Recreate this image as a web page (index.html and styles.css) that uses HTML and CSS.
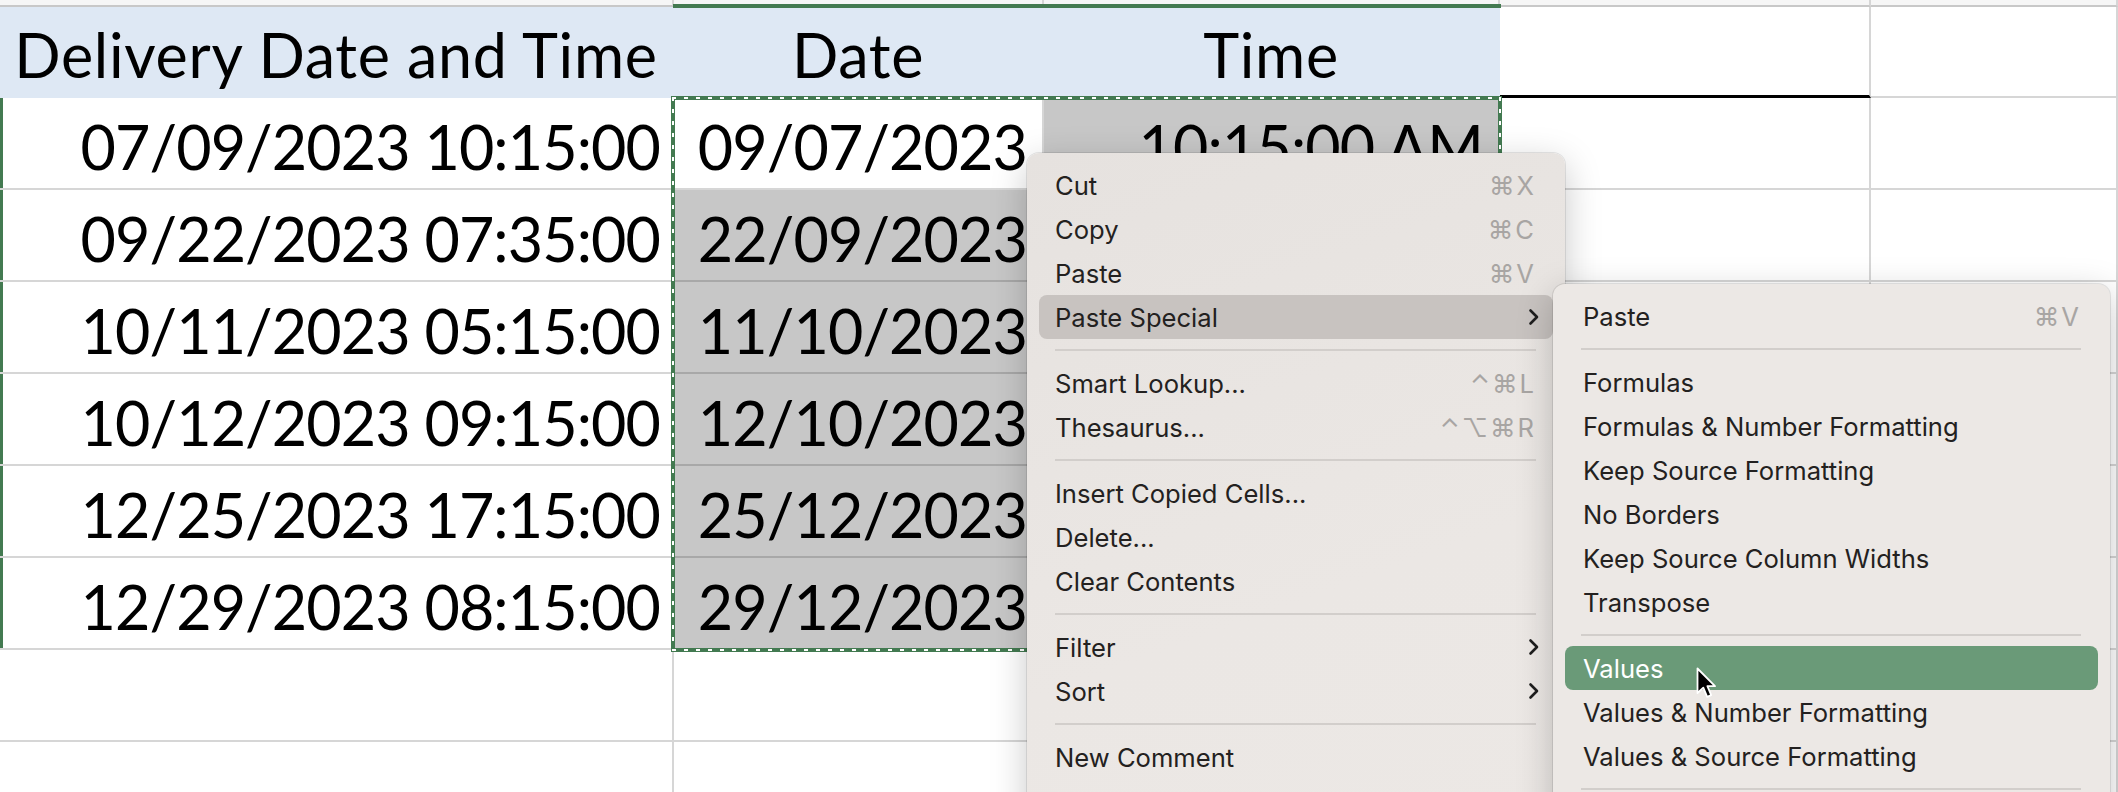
FILE: index.html
```html
<!DOCTYPE html>
<html>
<head>
<meta charset="utf-8">
<link rel="stylesheet" href="styles.css">
</head>
<body>
<div class="sheet">
  <div class="c top"></div><div class="c top"></div><div class="c top"></div><div class="c top"></div><div class="c top"></div>

  <div class="c hd">Delivery Date and Time</div>
  <div class="c hd">Date</div>
  <div class="c hd hd-last">Time</div>
  <div class="c d-top"></div>
  <div class="c"></div>

  <div class="c edge">07/09/2023 10:15:00</div>
  <div class="c active">09/07/2023</div>
  <div class="c sel">10:15:00 AM</div>
  <div class="c"></div><div class="c"></div>

  <div class="c edge">09/22/2023 07:35:00</div>
  <div class="c sel">22/09/2023</div>
  <div class="c sel">7:35:00 AM</div>
  <div class="c"></div><div class="c"></div>

  <div class="c edge">10/11/2023 05:15:00</div>
  <div class="c sel">11/10/2023</div>
  <div class="c sel">5:15:00 AM</div>
  <div class="c"></div><div class="c"></div>

  <div class="c edge">10/12/2023 09:15:00</div>
  <div class="c sel">12/10/2023</div>
  <div class="c sel">9:15:00 AM</div>
  <div class="c"></div><div class="c"></div>

  <div class="c edge">12/25/2023 17:15:00</div>
  <div class="c sel">25/12/2023</div>
  <div class="c sel">5:15:00 PM</div>
  <div class="c"></div><div class="c"></div>

  <div class="c edge">12/29/2023 08:15:00</div>
  <div class="c sel">29/12/2023</div>
  <div class="c sel">8:15:00 AM</div>
  <div class="c"></div><div class="c"></div>

  <div class="c"></div><div class="c"></div><div class="c"></div><div class="c"></div><div class="c"></div>
  <div class="c"></div><div class="c"></div><div class="c"></div><div class="c"></div><div class="c"></div>

  <div class="col-mark"></div>
  <div class="marquee"></div>
</div>

<div class="menu main-menu">
  <div class="item"><span>Cut</span><span class="sc">⌘X</span></div>
  <div class="item"><span>Copy</span><span class="sc">⌘C</span></div>
  <div class="item"><span>Paste</span><span class="sc">⌘V</span></div>
  <div class="item hl"><span>Paste Special</span><svg class="chev" width="12" height="18" viewBox="0 0 12 18"><path d="M2.5 2.5 L9 9 L2.5 15.5" fill="none" stroke="#1e1e1e" stroke-width="2.6" stroke-linecap="round" stroke-linejoin="round"/></svg></div>
  <div class="sep"></div>
  <div class="item"><span>Smart Lookup...</span><span class="sc">⌃⌘L</span></div>
  <div class="item"><span>Thesaurus...</span><span class="sc">⌃⌥⌘R</span></div>
  <div class="sep"></div>
  <div class="item"><span>Insert Copied Cells...</span></div>
  <div class="item"><span>Delete...</span></div>
  <div class="item"><span>Clear Contents</span></div>
  <div class="sep"></div>
  <div class="item"><span>Filter</span><svg class="chev" width="12" height="18" viewBox="0 0 12 18"><path d="M2.5 2.5 L9 9 L2.5 15.5" fill="none" stroke="#1e1e1e" stroke-width="2.6" stroke-linecap="round" stroke-linejoin="round"/></svg></div>
  <div class="item"><span>Sort</span><svg class="chev" width="12" height="18" viewBox="0 0 12 18"><path d="M2.5 2.5 L9 9 L2.5 15.5" fill="none" stroke="#1e1e1e" stroke-width="2.6" stroke-linecap="round" stroke-linejoin="round"/></svg></div>
  <div class="sep"></div>
  <div class="item"><span>New Comment</span></div>
  <div class="item"><span>New Note</span></div>
</div>

<div class="menu sub-menu">
  <div class="item"><span>Paste</span><span class="sc">⌘V</span></div>
  <div class="sep"></div>
  <div class="item"><span>Formulas</span></div>
  <div class="item"><span>Formulas &amp; Number Formatting</span></div>
  <div class="item"><span>Keep Source Formatting</span></div>
  <div class="item"><span>No Borders</span></div>
  <div class="item"><span>Keep Source Column Widths</span></div>
  <div class="item"><span>Transpose</span></div>
  <div class="sep"></div>
  <div class="item green"><span>Values</span></div>
  <div class="item"><span>Values &amp; Number Formatting</span></div>
  <div class="item"><span>Values &amp; Source Formatting</span></div>
  <div class="sep"></div>
</div>

<svg class="cursor" width="24" height="34" viewBox="0 0 24 34">
  <path d="M1.5 1.5 L1.5 26 L7.3 20.6 L11.2 29.8 L15.2 28.1 L11.4 19.2 L19 19.2 Z" fill="#000" stroke="#fff" stroke-width="1.8" stroke-linejoin="round"/>
</svg>
</body>
</html>
```

FILE: styles.css
```css
html, body {
  margin: 0;
  padding: 0;
}
body {
  width: 2118px;
  height: 792px;
  overflow: hidden;
  position: relative;
  background: #fff;
  font-family: Lato, "Open Sans", sans-serif;
}

.sheet {
  position: relative;
  display: grid;
  grid-template-columns: 674px 370px 456px 371px 247px;
  grid-template-rows: 7px 91px repeat(8, 92px);
}

.c {
  box-sizing: border-box;
  border-right: 2px solid #d6d6d6;
  border-bottom: 2px solid #d6d6d6;
  display: flex;
  align-items: flex-end;
  justify-content: flex-end;
  padding: 0 12px 11px 0;
  font-size: 61px;
  line-height: 61px;
  letter-spacing: -0.9px;
  color: #000;
  white-space: nowrap;
  overflow: visible;
  background: #fff;
}

.top {
  background: #f6f6f6;
  border-bottom-color: #c8c8c8;
  padding: 0;
}

.hd {
  background: #dee8f4;
  border-right-color: #dee8f4;
  border-bottom: none;
  justify-content: center;
  padding: 0 0 13px 0;
  letter-spacing: 0.7px;
}
.hd-last {
  border-right-color: #dee8f4;
}

.d-top {
  border-bottom: 3px solid #000;
}

.edge {
  box-shadow: inset 3px 0 0 #437a51;
}

.active {
  background: #fff;
  padding-right: 15px;
}

.sel {
  background: #c7c7c7;
  border-bottom-color: #a8a8a8;
  border-right-color: #a8a8a8;
  padding-right: 15px;
}

.col-mark {
  position: absolute;
  left: 673px;
  top: 4px;
  width: 828px;
  height: 4px;
  background: #437a51;
}

.marquee {
  position: absolute;
  left: 671px;
  top: 96px;
  width: 831px;
  height: 556px;
  box-sizing: border-box;
  border: 4px solid #437a51;
}
.marquee::after {
  content: "";
  position: absolute;
  inset: -3px;
  background:
    repeating-linear-gradient(90deg, #fff 0 4px, transparent 4px 12px) top left / 100% 2px no-repeat,
    repeating-linear-gradient(90deg, #fff 0 4px, transparent 4px 12px) bottom left / 100% 2px no-repeat,
    repeating-linear-gradient(180deg, #fff 0 4px, transparent 4px 12px) top left / 2px 100% no-repeat,
    repeating-linear-gradient(180deg, #fff 0 4px, transparent 4px 12px) top right / 2px 100% no-repeat;
}

.menu {
  position: absolute;
  box-sizing: border-box;
  padding: 10px 12px;
  border-radius: 12px;
  background: linear-gradient(160deg, #e6e2df 0%, #ebe7e4 60%, #ece8e5 100%);
  box-shadow: 0 10px 36px rgba(0, 0, 0, 0.22), 0 0 0 1px rgba(0, 0, 0, 0.09);
  font-family: Inter, "Noto Sans", sans-serif;
  font-size: 25.6px;
  color: #232120;
}

.main-menu {
  left: 1027px;
  top: 153px;
  width: 538px;
  height: 720px;
}

.sub-menu {
  left: 1553px;
  top: 284px;
  width: 557px;
  height: 620px;
  background: #ece8e5;
}

.item {
  height: 44px;
  display: flex;
  align-items: center;
  justify-content: space-between;
  padding: 0 17px 0 16px;
  border-radius: 8px;
  white-space: nowrap;
}

.sub-menu .item {
  padding-left: 18px;
}

.item.hl {
  background: #c8c3c0;
}

.item.green {
  background: #6a9a78;
  color: #fff;
}

.sc {
  color: #a8a5a3;
  font-family: Inter, "DejaVu Sans", sans-serif;
  letter-spacing: 2px;
}

.chev {
  display: block;
  margin-right: -4px;
}

.sep {
  height: 22px;
  display: flex;
  align-items: center;
  padding: 0 17px 0 16px;
}
.sep::after {
  content: "";
  flex: 1;
  height: 2px;
  background: #d2cecb;
}

.cursor {
  position: absolute;
  left: 1696px;
  top: 667px;
}
```
